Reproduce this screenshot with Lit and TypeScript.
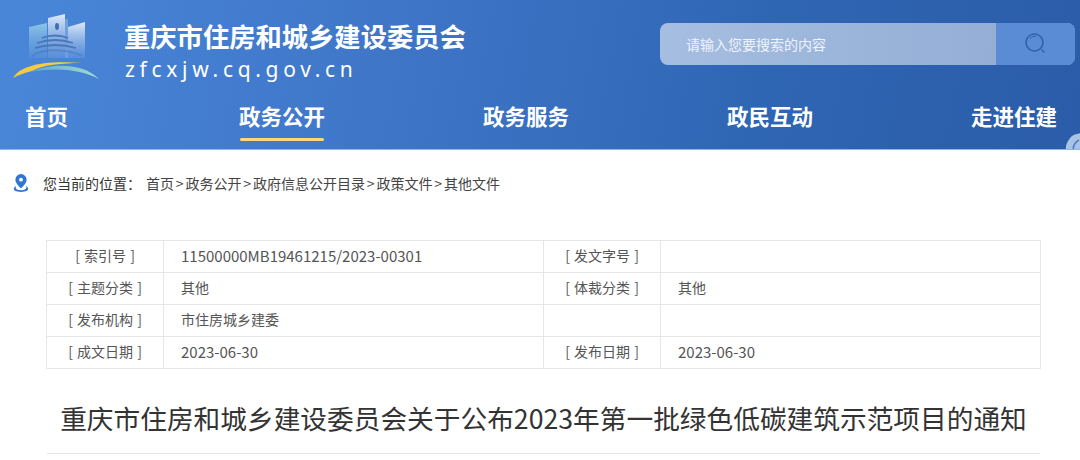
import { LitElement, html, css, svg } from "lit";
import { customElement } from "lit/decorators.js";

const logo = svg`<svg class="logo" width="90" height="70" viewBox="0 0 90 70">
  <defs>
    <linearGradient id="b1" x1="0" y1="0" x2="0" y2="1"><stop offset="0" stop-color="#8cc4e8"/><stop offset="1" stop-color="#6fa6dd" stop-opacity=".25"/></linearGradient>
    <linearGradient id="b2" x1="0" y1="0" x2="0" y2="1"><stop offset="0" stop-color="#dfebf8"/><stop offset="1" stop-color="#87b0e4" stop-opacity=".25"/></linearGradient>
    <linearGradient id="y" x1="0" y1="0" x2="1" y2="0"><stop offset="0" stop-color="#f3c93a"/><stop offset="1" stop-color="#f6cf4f"/></linearGradient>
    <linearGradient id="t" x1="0" y1="0" x2="1" y2="0"><stop offset="0" stop-color="#5ba9c9"/><stop offset="1" stop-color="#a5dcd2"/></linearGradient>
  </defs>
  <path d="M17 13 L35 9 V44 H17 Z" fill="url(#b1)"/>
  <path d="M36 4 L53 0 V44 H36 Z" fill="url(#b2)"/>
  <path d="M53 5 L56 5 V44 H53 Z" fill="#b9d2ef" fill-opacity=".35"/>
  <path d="M56 13 L73 8 V44 H56 Z" fill="url(#b2)"/>
  <ellipse cx="45" cy="12.5" rx="2" ry="3.4" fill="#3f6fb3"/>
  <g fill="none" stroke="#4c76b6" stroke-width="1.8">
    <path d="M30 24 Q43 19 56 24"/>
    <path d="M25 29 Q43 23 61 29"/>
    <path d="M23 34 Q43 28 64 34"/>
    <path d="M20 43 Q24 37 43 36 Q62 37 70 42" stroke-opacity=".5"/>
  </g>
  <path d="M1 64 C8 52 30 46 70 49 C50 49 30 51 20 57 C12 59 6 61 1 64 Z" fill="url(#y)"/>
  <path d="M18 58 C35 50 70 47 87 65 C70 56 45 53 18 58 Z" fill="url(#t)"/>
</svg>`;

@customElement("app-root")
export class AppRoot extends LitElement {
  static styles = css`
    :host { display: block; width: 1080px; height: 460px; overflow: hidden; background: #fff; font-family: "Noto Sans CJK SC", "Noto Sans", sans-serif; }
    .head { height: 149px; border-bottom: 1px solid #8fb6e6; background: linear-gradient(100deg, #4a87d9 0%, #3f76c8 35%, #2f66b4 70%, #2a5ca9 100%); color: #fff; position: relative; overflow: hidden; }
    .top { display: flex; height: 93px; }
    .logo { margin: 14px 0 0 12px; flex: none; }
    .brand { margin-left: 23px; padding-top: 16px; width: 346px; }
    .name { font-size: 26.3px; line-height: 40px; font-weight: 700; margin-left: -1px; white-space: nowrap; }
    .domain { font-family: "Noto Sans", sans-serif; font-size: 21px; line-height: 27px; letter-spacing: 4.7px; white-space: nowrap; }
    .search { margin: 23px 0 0 189px; width: 415px; height: 42px; display: flex; border-radius: 8px; overflow: hidden; background: linear-gradient(90deg, rgba(255,255,255,.56), rgba(255,255,255,.48)); flex: none; }
    .field { flex: 1; padding-left: 26px; font-size: 14px; line-height: 42px; color: #eef3fb; }
    .go { width: 79px; background: #5a8cd6; display: flex; align-items: center; justify-content: center; }
    .nav { display: grid; grid-template-columns: 214px 244px 244px 244px auto; padding-left: 25px; }
    .item { font-size: 21.5px; line-height: 46px; font-weight: 700; white-space: nowrap; justify-self: start; position: relative; }
    .on::after { content: ""; position: absolute; left: 1px; right: 1px; bottom: -2px; height: 3px; border-radius: 2px; background: #fdd67d; }
    .badge { position: absolute; right: -3px; bottom: -2px; }
    .crumb { display: flex; align-items: center; height: 20px; margin-top: 23px; padding-left: 13px; font-size: 14px; color: #444; white-space: nowrap; }
    .pin { margin-right: 14px; flex: none; }
    .here { width: 103px; color: #333; }
    .sep { width: 11.5px; text-align: center; }
    table { border-collapse: collapse; margin: 47px 0 0 46px; width: 994px; table-layout: fixed; font-size: 14px; color: #555; }
    td { border: 1px solid #e6e6e6; height: 28px; padding: 0 0 3px; }
    .l { text-align: center; word-spacing: 1px; }
    .v { padding-left: 17px; }
    .num { font-size: 15px; }
    h1 { margin: 29px 0 0; padding-left: 7px; font-size: 26.7px; line-height: 40px; font-weight: 400; text-align: center; color: #333; white-space: nowrap; }
    .rule { height: 1px; background: #e5e5e5; margin: 15px 40px 0 47px; }
  `;

  render() {
    const crumbs = ["首页", "政务公开", "政府信息公开目录", "政策文件", "其他文件"];
    const rows = [
      ["[ 索引号 ]", "11500000MB19461215/2023-00301", "[ 发文字号 ]", ""],
      ["[ 主题分类 ]", "其他", "[ 体裁分类 ]", "其他"],
      ["[ 发布机构 ]", "市住房城乡建委", "", ""],
      ["[ 成文日期 ]", "2023-06-30", "[ 发布日期 ]", "2023-06-30"],
    ];
    const val = (t: string) => html`<td class="v ${/^[\x00-\x7f]+$/.test(t) ? "num" : ""}">${t}</td>`;
    return html`
      <div class="head">
        <div class="top">
          ${logo}
          <div class="brand">
            <div class="name">重庆市住房和城乡建设委员会</div>
            <div class="domain">zfcxjw.cq.gov.cn</div>
          </div>
          <div class="search">
            <div class="field">请输入您要搜索的内容</div>
            <div class="go">
              <svg width="24" height="24" viewBox="0 0 24 24" fill="none" stroke="#2f62a8">
                <circle cx="10.5" cy="10.5" r="8.5" stroke-width="1.6"/>
                <path d="M6 6.5 A6 6 0 0 1 12 4.5" stroke-width="1"/>
                <path d="M17.5 17.5 L20.5 20.5" stroke-width="1.4"/>
              </svg>
            </div>
          </div>
        </div>
        <div class="nav">
          <div class="item">首页</div>
          <div class="item on">政务公开</div>
          <div class="item">政务服务</div>
          <div class="item">政民互动</div>
          <div class="item">走进住建</div>
        </div>
        <svg class="badge" width="18" height="18" viewBox="0 0 18 18" fill="none">
          <path d="M1 18 C0 12 3 7 7 3 C10 1 14 0 18 0 V18 Z" fill="#a9c3e3"/>
          <path d="M8 18 C8 13 10 9 14 7" stroke="#4f7fbf" stroke-width="1.5"/>
        </svg>
      </div>
      <div class="crumb">
        <svg class="pin" width="16" height="18" viewBox="0 0 16 18">
          <path d="M8 0 A5.7 5.7 0 0 0 2.4 5.7 C2.4 9 5.8 12.2 8 14.4 C10.2 12.2 13.6 9 13.6 5.7 A5.7 5.7 0 0 0 8 0 Z M8 3.8 A1.9 1.9 0 1 1 8 7.6 A1.9 1.9 0 1 1 8 3.8 Z" fill="#2f75d6" fill-rule="evenodd"/>
          <path d="M3.2 12 C-0.5 13.8 -0.5 18 8 18 C16.5 18 16.5 13.8 12.8 12 C14.5 14.5 12 16.3 8 16.3 C4 16.3 1.5 14.5 3.2 12 Z" fill="#2f75d6"/>
        </svg>
        <span class="here">您当前的位置：</span>
        ${crumbs.map((c, i) => html`${i ? html`<span class="sep">&gt;</span>` : ""}<span>${c}</span>`)}
      </div>
      <table>
        <colgroup><col style="width:117px"><col style="width:380px"><col style="width:117px"><col style="width:380px"></colgroup>
        ${rows.map(r => html`<tr>
          <td class="l">${r[0]}</td>${val(r[1])}<td class="l">${r[2]}</td>${val(r[3])}
        </tr>`)}
      </table>
      <h1>重庆市住房和城乡建设委员会关于公布2023年第一批绿色低碳建筑示范项目的通知</h1>
      <div class="rule"></div>
    `;
  }
}
